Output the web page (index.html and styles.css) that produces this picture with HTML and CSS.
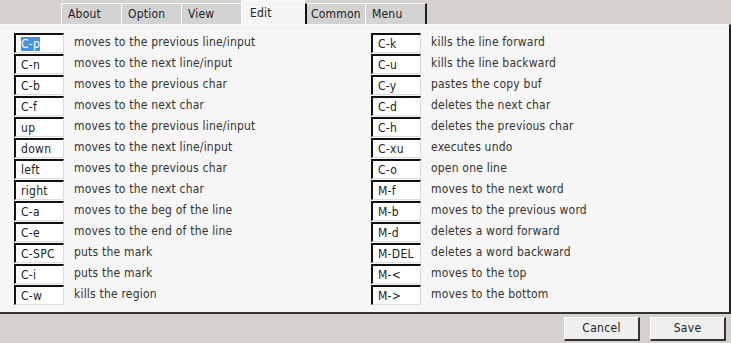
FILE: index.html
```html
<!DOCTYPE html>
<html>
<head>
<meta charset="utf-8">
<link rel="stylesheet" href="styles.css">
</head>
<body>
<div class="window">
  <div class="tabbar">
    <div class="tab">About</div>
    <div class="tab">Option</div>
    <div class="tab">View</div>
    <div class="tab active">Edit</div>
    <div class="tab">Common</div>
    <div class="tab last">Menu</div>
  </div>
  <div class="panel">
    <div class="col">
      <div class="row"><div class="key"><span class="sel">C-p</span></div><div class="desc">moves to the previous line/input</div></div>
      <div class="row"><div class="key">C-n</div><div class="desc">moves to the next line/input</div></div>
      <div class="row"><div class="key">C-b</div><div class="desc">moves to the previous char</div></div>
      <div class="row"><div class="key">C-f</div><div class="desc">moves to the next char</div></div>
      <div class="row"><div class="key">up</div><div class="desc">moves to the previous line/input</div></div>
      <div class="row"><div class="key">down</div><div class="desc">moves to the next line/input</div></div>
      <div class="row"><div class="key">left</div><div class="desc">moves to the previous char</div></div>
      <div class="row"><div class="key">right</div><div class="desc">moves to the next char</div></div>
      <div class="row"><div class="key">C-a</div><div class="desc">moves to the beg of the line</div></div>
      <div class="row"><div class="key">C-e</div><div class="desc">moves to the end of the line</div></div>
      <div class="row"><div class="key">C-SPC</div><div class="desc">puts the mark</div></div>
      <div class="row"><div class="key">C-i</div><div class="desc">puts the mark</div></div>
      <div class="row"><div class="key">C-w</div><div class="desc">kills the region</div></div>
    </div>
    <div class="col">
      <div class="row"><div class="key">C-k</div><div class="desc">kills the line forward</div></div>
      <div class="row"><div class="key">C-u</div><div class="desc">kills the line backward</div></div>
      <div class="row"><div class="key">C-y</div><div class="desc">pastes the copy buf</div></div>
      <div class="row"><div class="key">C-d</div><div class="desc">deletes the next char</div></div>
      <div class="row"><div class="key">C-h</div><div class="desc">deletes the previous char</div></div>
      <div class="row"><div class="key">C-xu</div><div class="desc">executes undo</div></div>
      <div class="row"><div class="key">C-o</div><div class="desc">open one line</div></div>
      <div class="row"><div class="key">M-f</div><div class="desc">moves to the next word</div></div>
      <div class="row"><div class="key">M-b</div><div class="desc">moves to the previous word</div></div>
      <div class="row"><div class="key">M-d</div><div class="desc">deletes a word forward</div></div>
      <div class="row"><div class="key">M-DEL</div><div class="desc">deletes a word backward</div></div>
      <div class="row"><div class="key">M-&lt;</div><div class="desc">moves to the top</div></div>
      <div class="row"><div class="key">M-&gt;</div><div class="desc">moves to the bottom</div></div>
    </div>
  </div>
  <div class="buttons">
    <div class="btn">Cancel</div>
    <div class="btn">Save</div>
  </div>
</div>
</body>
</html>
```
FILE: styles.css
```css
html, body {
  margin: 0;
  padding: 0;
  background: #d6d2ce;
}
body {
  font-family: "DejaVu Sans Condensed", "DejaVu Sans", sans-serif;
  font-size: 12px;
  color: #333;
  width: 731px;
  height: 343px;
  overflow: hidden;
}
.window {
  display: flex;
  flex-direction: column;
  height: 343px;
}
.tabbar {
  display: flex;
  height: 24px;
  padding-left: 61px;
  align-items: flex-end;
}
.tab {
  box-sizing: border-box;
  width: 60px;
  height: 21px;
  background: #d3d3d3;
  border-top: 1px solid #fafafa;
  border-left: 1px solid #fafafa;
  padding-left: 6px;
  line-height: 20px;
  color: #222;
  letter-spacing: 0.2px;
}
.tab.active {
  width: 64px;
  height: 24px;
  background: #f5f5f5;
  padding-left: 8px;
  line-height: 25px;
  border-left: 1px solid #fafafa;
}
.tab.active + .tab {
  border-left: 2px solid #111;
  padding-left: 4px;
}
.tab.last {
  width: 62px;
  border-right: 2px solid #222;
}
.panel {
  box-sizing: border-box;
  width: 731px;
  height: 290px;
  background: #f6f6f6;
  border-top: 1px solid #fbfbfb;
  border-right: 2px solid #222;
  border-bottom: 2px solid #333;
  display: grid;
  grid-template-columns: 357px 1fr;
  padding: 8px 0 0 14px;
}
.col {
  display: flex;
  flex-direction: column;
  gap: 1px;
}
.row {
  display: flex;
  align-items: center;
  height: 20px;
}
.key {
  box-sizing: border-box;
  width: 50px;
  height: 20px;
  background: #fff;
  border-top: 2px solid #111;
  border-left: 2px solid #111;
  border-right: 1px solid #ddd;
  border-bottom: 1px solid #ddd;
  padding-left: 5px;
  padding-top: 1px;
  line-height: 17px;
  color: #222;
  letter-spacing: 0.3px;
  flex: none;
}
.sel {
  background: #4a90d9;
  color: #fff;
}
.desc {
  margin-left: 10px;
  margin-top: -3px;
  color: #333;
  white-space: nowrap;
  letter-spacing: 0.2px;
}
.buttons {
  display: flex;
  justify-content: flex-end;
  gap: 10px;
  padding: 3px 5px 0 0;
}
.btn {
  box-sizing: border-box;
  width: 76px;
  height: 24px;
  background: #efefef;
  border-top: 1px solid #fff;
  border-left: 1px solid #fff;
  border-right: 2px solid #333;
  border-bottom: 2px solid #333;
  text-align: center;
  line-height: 21px;
  color: #222;
  letter-spacing: 0.3px;
}
```
